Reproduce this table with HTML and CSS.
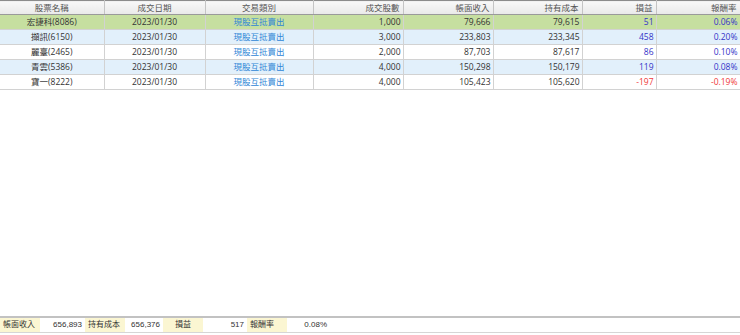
FILE: index.html
```html
<!DOCTYPE html>
<html lang="zh-Hant">
<head>
<meta charset="utf-8">
<link rel="stylesheet" href="styles.css">
</head>
<body>
<div class="page">
  <table class="grid">
    <colgroup>
      <col class="c1"><col class="c2"><col class="c3"><col class="c4"><col class="c5"><col class="c6"><col class="c7"><col class="c8">
    </colgroup>
    <thead>
      <tr>
        <th class="ctr">股票名稱</th>
        <th class="ctr">成交日期</th>
        <th class="ctr">交易類別</th>
        <th>成交股數</th>
        <th>帳面收入</th>
        <th>持有成本</th>
        <th>損益</th>
        <th>報酬率</th>
      </tr>
    </thead>
    <tbody>
      <tr class="sel">
        <td class="ctr">宏捷科(8086)</td><td class="ctr">2023/01/30</td><td class="ctr type">現股互抵賣出</td>
        <td>1,000</td><td>79,666</td><td>79,615</td><td class="pos">51</td><td class="pos">0.06%</td>
      </tr>
      <tr class="alt">
        <td class="ctr">擷訊(6150)</td><td class="ctr">2023/01/30</td><td class="ctr type">現股互抵賣出</td>
        <td>3,000</td><td>233,803</td><td>233,345</td><td class="pos">458</td><td class="pos">0.20%</td>
      </tr>
      <tr>
        <td class="ctr">麗臺(2465)</td><td class="ctr">2023/01/30</td><td class="ctr type">現股互抵賣出</td>
        <td>2,000</td><td>87,703</td><td>87,617</td><td class="pos">86</td><td class="pos">0.10%</td>
      </tr>
      <tr class="alt">
        <td class="ctr">青雲(5386)</td><td class="ctr">2023/01/30</td><td class="ctr type">現股互抵賣出</td>
        <td>4,000</td><td>150,298</td><td>150,179</td><td class="pos">119</td><td class="pos">0.08%</td>
      </tr>
      <tr>
        <td class="ctr">寶一(8222)</td><td class="ctr">2023/01/30</td><td class="ctr type">現股互抵賣出</td>
        <td>4,000</td><td>105,423</td><td>105,620</td><td class="neg">-197</td><td class="neg">-0.19%</td>
      </tr>
    </tbody>
  </table>
  <div class="spacer"></div>
  <div class="summary">
    <span class="lbl">帳面收入</span><span class="val v1">656,893</span>
    <span class="lbl">持有成本</span><span class="val v2">656,376</span>
    <span class="lbl ctr">損益</span><span class="val v3">517</span>
    <span class="lbl">報酬率</span><span class="val v4">0.08%</span>
  </div>
</div>
</body>
</html>
```
FILE: styles.css
```css
html, body {
  margin: 0;
  padding: 0;
  background: #ffffff;
}
body {
  font-family: "Open Sans", "Noto Sans CJK TC", sans-serif;
  font-size: 8.5px;
  color: #333333;
}
.page {
  width: 740px;
  height: 335px;
  display: flex;
  flex-direction: column;
}
.grid {
  width: 740px;
  border-collapse: collapse;
  table-layout: fixed;
}
.c1 { width: 104px; }
.c2 { width: 101px; }
.c3 { width: 108px; }
.c4 { width: 90px; }
.c5 { width: 90px; }
.c6 { width: 89px; }
.c7 { width: 74px; }
.c8 { width: 84px; }
.grid th {
  height: 13px;
  padding: 0 3px 0 0;
  font-weight: normal;
  color: #555555;
  text-align: right;
  background: linear-gradient(#f8f8f8, #e9e9e9);
  border-top: 1px solid #8c8c8c;
  border-bottom: 1px solid #9a9a9a;
  border-right: 1px solid #c4c4c4;
  line-height: 13px;
  white-space: nowrap;
}
.grid td {
  height: 14px;
  padding: 0 2px 0 0;
  text-align: right;
  border-right: 1px solid #d2d2d2;
  border-bottom: 1px solid #d2d2d2;
  line-height: 14px;
  white-space: nowrap;
  color: #333333;
}
.grid th.ctr, .grid td.ctr {
  text-align: center;
  padding: 0;
}
.grid tr.sel td {
  background: #c6dfa0;
}
.grid tr.alt td {
  background: #e2f0fb;
}
.grid td.type {
  color: #2f86d6;
}
.grid td.pos {
  color: #3434c8;
}
.grid td.neg {
  color: #f03a3a;
}
.spacer {
  flex: 1;
}
.summary {
  display: flex;
  height: 14px;
  margin-bottom: 2px;
  border-top: 2px solid #c2c2c2;
  border-bottom: 1px solid #d6d6d6;
  font-family: "Liberation Sans", "Noto Sans CJK TC", sans-serif;
  font-size: 8px;
  line-height: 14px;
  color: #333333;
}
.lbl {
  width: 37px;
  padding-left: 3px;
  background: #fbf6d2;
}
.lbl.ctr {
  padding-left: 0;
  text-align: center;
  width: 40px;
}
.val {
  text-align: right;
  padding-right: 3px;
}
.v1 { width: 42px; }
.v2 { width: 35px; }
.v3 { width: 41px; }
.v4 { width: 40px; }
```
